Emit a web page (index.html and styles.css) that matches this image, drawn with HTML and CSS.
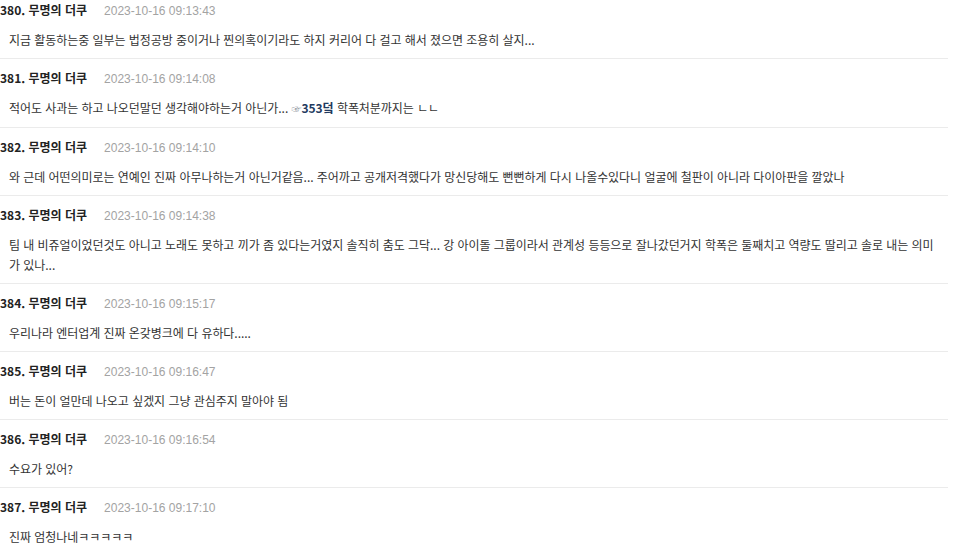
FILE: index.html
```html
<!DOCTYPE html>
<html lang="ko">
<head>
<meta charset="utf-8">
<link rel="stylesheet" href="styles.css">
</head>
<body>
<div class="list">
  <div class="item">
    <div class="head"><span class="num">380.</span> <span class="name">무명의 더쿠</span><span class="date">2023-10-16 09:13:43</span></div>
    <div class="text">지금 활동하는중 일부는 법정공방 중이거나 찐의혹이기라도 하지 커리어 다 걸고 해서 졌으면 조용히 살지...</div>
  </div>
  <div class="item">
    <div class="head"><span class="num">381.</span> <span class="name">무명의 더쿠</span><span class="date">2023-10-16 09:14:08</span></div>
    <div class="text">적어도 사과는 하고 나오던말던 생각해야하는거 아닌가... <span class="hand">☞</span><a class="ref">353덬</a> 학폭처분까지는 ㄴㄴ</div>
  </div>
  <div class="item">
    <div class="head"><span class="num">382.</span> <span class="name">무명의 더쿠</span><span class="date">2023-10-16 09:14:10</span></div>
    <div class="text">와 근데 어떤의미로는 연예인 진짜 아무나하는거 아닌거같음... 주어까고 공개저격했다가 망신당해도 뻔뻔하게 다시 나올수있다니 얼굴에 철판이 아니라 다이아판을 깔았나</div>
  </div>
  <div class="item">
    <div class="head"><span class="num">383.</span> <span class="name">무명의 더쿠</span><span class="date">2023-10-16 09:14:38</span></div>
    <div class="text">팀 내 비쥬얼이었던것도 아니고 노래도 못하고 끼가 좀 있다는거였지 솔직히 춤도 그닥... 강 아이돌 그룹이라서 관계성 등등으로 잘나갔던거지 학폭은 둘째치고 역량도 딸리고 솔로 내는 의미 가 있나...</div>
  </div>
  <div class="item">
    <div class="head"><span class="num">384.</span> <span class="name">무명의 더쿠</span><span class="date">2023-10-16 09:15:17</span></div>
    <div class="text">우리나라 엔터업계 진짜 온갖병크에 다 유하다.....</div>
  </div>
  <div class="item">
    <div class="head"><span class="num">385.</span> <span class="name">무명의 더쿠</span><span class="date">2023-10-16 09:16:47</span></div>
    <div class="text">버는 돈이 얼만데 나오고 싶겠지 그냥 관심주지 말아야 됨</div>
  </div>
  <div class="item">
    <div class="head"><span class="num">386.</span> <span class="name">무명의 더쿠</span><span class="date">2023-10-16 09:16:54</span></div>
    <div class="text">수요가 있어?</div>
  </div>
  <div class="item">
    <div class="head"><span class="num">387.</span> <span class="name">무명의 더쿠</span><span class="date">2023-10-16 09:17:10</span></div>
    <div class="text">진짜 엄청나네ㅋㅋㅋㅋㅋ</div>
  </div>
</div>
</body>
</html>
```

FILE: styles.css
```css
html, body {
  margin: 0;
  padding: 0;
  background: #ffffff;
}
body {
  font-family: "Noto Sans CJK KR", "Noto Sans", sans-serif;
  color: #222222;
  overflow: hidden;
}
.list {
  width: 948px;
}
.item {
  padding: 9px 0 8px 0;
  border-bottom: 1px solid #ebebeb;
}
.item:first-child {
  padding-top: 0;
}
.head {
  height: 20px;
  line-height: 20px;
  font-size: 12px;
  white-space: nowrap;
}
.num, .name {
  font-weight: 700;
  color: #222222;
}
.date {
  margin-left: 17px;
  font-size: 12px;
  color: #a3a3a3;
  font-family: "Liberation Sans", "Noto Sans CJK KR", sans-serif;
}
.text {
  margin-top: 10px;
  padding: 0 8px 0 9px;
  font-size: 12px;
  line-height: 20px;
  letter-spacing: -0.05px;
  color: #333333;
  word-break: keep-all;
}
.hand {
  color: #8a8f99;
  font-size: 10px;
}
.ref {
  color: #1f3a60;
  font-weight: 700;
}
```
